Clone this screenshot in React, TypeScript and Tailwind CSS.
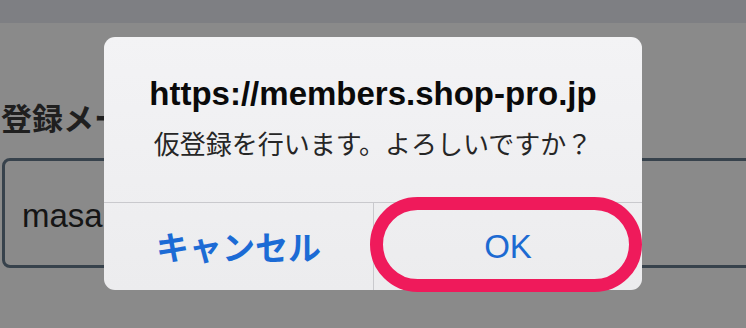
import React from "react";

const sans = "font-['Liberation_Sans','Noto_Sans_CJK_JP',sans-serif]";
const jp = "font-['Noto_Sans_CJK_JP','Liberation_Sans',sans-serif]";

const App = () => {
    return (
        <div className="relative w-[746px] h-[328px] overflow-hidden bg-[#8a8a8a]">
            <div className="h-[23px] bg-[#7e7f83]" />

            {/* page behind the alert, only the part left of the dialog shows */}
            <div className="pt-[74px]">
                <div className="w-[104px] overflow-hidden">
                    <h2 className={`${jp} pl-[1px] text-[31px] leading-[40px] font-semibold text-[#1f1f1f] whitespace-nowrap`}>
                        登録メー
                    </h2>
                </div>
                <div className="mt-[21px] ml-[2px] w-[780px] h-[110px] border-[3px] border-[#37424c] rounded-[8px] flex items-center pl-[17px]">
                    <div className="w-[85px] overflow-hidden">
                        <span className={`${sans} block text-[33px] text-[#151515] mt-[6px] whitespace-nowrap`}>masak</span>
                    </div>
                </div>
            </div>

            {/* alert */}
            <div className="absolute left-[104px] top-[37px] w-[538px] h-[253px] rounded-[11px] bg-gradient-to-b from-[#f3f3f5] to-[#ececee] flex flex-col overflow-hidden">
                <div className="h-[165px] flex flex-col items-center pt-[37px]">
                    <p className={`${sans} text-[33px] leading-[40px] font-bold text-[#0a0a0a] whitespace-nowrap`}>
                        https://members.shop-pro.jp
                    </p>
                    <p className={`${jp} mt-[13px] text-[26px] leading-[32px] text-[#262626] whitespace-nowrap`}>
                        仮登録を行います。よろしいですか？
                    </p>
                </div>
                <div className="flex-1 flex border-t border-[#c9c9cd]">
                    <button className={`${jp} w-[269px] flex items-center justify-center text-[33px] font-bold text-[#1c6bd5]`}>
                        キャンセル
                    </button>
                    <button className={`${sans} flex-1 flex items-center justify-center border-l border-[#c9c9cd] text-[33px] text-[#1c6ad2]`}>
                        OK
                    </button>
                </div>
            </div>

            {/* highlight ring */}
            <div className="absolute left-[370px] top-[197px] w-[272px] h-[95px] rounded-full border-[13px] border-[#ef1a5b]" />
        </div>
    );
};

export default App;
